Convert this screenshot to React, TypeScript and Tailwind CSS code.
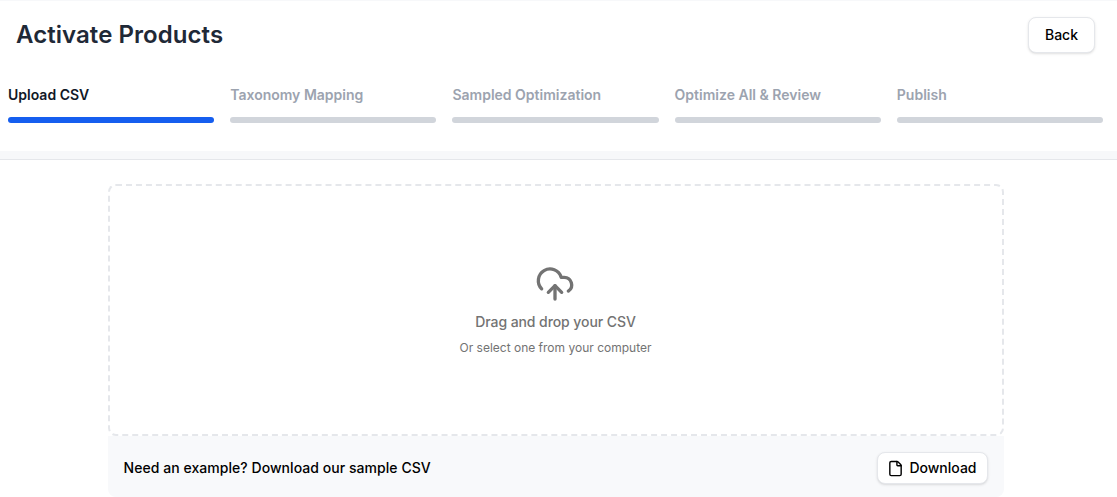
import { CloudUpload, File } from "lucide-react";

const steps = ["Upload CSV", "Taxonomy Mapping", "Sampled Optimization", "Optimize All & Review", "Publish"];

export default function App() {
  return (
    <div className="h-[497px] w-full overflow-hidden bg-white font-['Inter',sans-serif]">
      <div className="h-px bg-[#f7f8fa]" />
      <div className="flex h-[68px] items-center justify-between pl-4 pr-[22px]">
        <h1 className="text-2xl font-semibold tracking-[0.06px] text-[#1f2937]">Activate Products</h1>
        <button className="h-9 rounded-lg border border-gray-200 bg-white px-4 text-sm font-medium text-black shadow-sm">
          Back
        </button>
      </div>
      <div className="flex gap-4 pl-2 pr-3.5 pt-4">
        {steps.map((step, i) => (
          <div key={step} className="flex-1">
            <div className={i === 0 ? "text-sm font-semibold text-[#111827]" : "text-sm font-semibold text-[#9ca3af]"}>
              {step}
            </div>
            <div className={i === 0 ? "mt-3 h-1.5 rounded-full bg-[#155eef]" : "mt-3 h-1.5 rounded-full bg-[#d1d5db]"} />
          </div>
        ))}
      </div>
      <div className="mt-7 h-[9px] border-b border-[#e5e7eb] bg-[#f7f8fa]" />
      <div className="pr-[6px]">
        <div className="mx-auto mt-6 w-[896px]">
          <div className="flex h-[252px] flex-col items-center rounded-lg border-2 border-dashed border-[#e5e7eb] pt-[78px]">
            <CloudUpload className="mr-[2px] h-10 w-10 text-[#737373]" strokeWidth={2} />
            <p className="mt-2 text-sm font-[450] tracking-[-0.08px] text-[#737373]">Drag and drop your CSV</p>
            <p className="mt-2 text-xs text-[#737373]">Or select one from your computer</p>
          </div>
          <div className="flex h-[61px] items-center justify-between rounded-b-lg bg-[#f8f9fb] pl-4 pr-4 pt-[3px]">
            <span className="text-sm font-medium tracking-[0.05px] text-black">Need an example? Download our sample CSV</span>
            <button className="flex h-8 items-center gap-[5px] rounded-lg border border-gray-200 bg-white pl-[9px] pr-[10px] text-sm font-medium text-black shadow-sm">
              <File className="h-[17px] w-[17px]" />
              Download
            </button>
          </div>
        </div>
      </div>
    </div>
  );
}
